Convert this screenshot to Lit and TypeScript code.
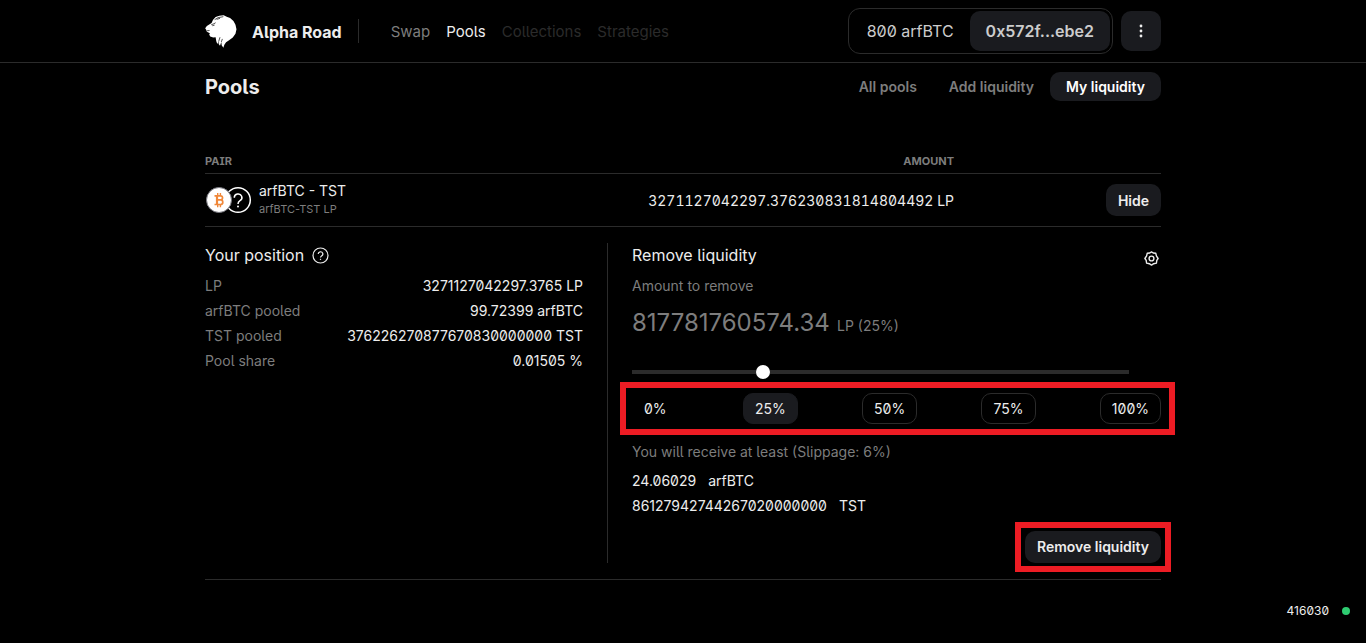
import { LitElement, html, css, svg } from "lit";
import { customElement, state } from "lit/decorators.js";
import { classMap } from "lit/directives/class-map.js";

const lion = svg`
  <path fill="#fff" d="M0 39 L5 33 L12 28 L19 24 L23 15 L31 6 L42 2 L55 1 L64 5 L74 9 L84 18 L90 29 L93 42 L90 56 L82 67 L71 75 L62 81 L57 88 L54 97 L49 90 L48 80 L44 91 L40 86 L40 79 L36 86 L33 78 L31 66 L24 67 L15 64 L12 58 L14 54 L5 50 L3 44 Z"/>
  <path fill="none" stroke="#000" stroke-width="2" d="M18 29 L26 26 L31 23 M21 32 L28 30 M28 14 L38 8 L54 5 M34 13 L44 10 M5 47 L13 46 M44 66 L40 79 M51 71 L48 80"/>`;

@customElement("app-root")
export class AppRoot extends LitElement {
  @state() private percent = 25;

  static styles = css`
    :host {
      display: flex;
      flex-direction: column;
      min-height: 100vh;
      background: #000;
      color: #ededed;
      font: 400 14px/25px Inter, sans-serif;
      font-feature-settings: "ss02", "zero";
    }
    * { box-sizing: border-box; }
    h1, h2, p, dl, dd { margin: 0; font-weight: 400; }
    a { color: inherit; text-decoration: none; }
    button {
      font: 600 14px/20px Inter, sans-serif;
      color: #ededed;
      background: #1a1b1f;
      border: 0;
      border-radius: 10px;
      padding: 6px 12px;
      cursor: pointer;
    }
    .inner { width: 100%; max-width: 988px; margin: 0 auto; padding: 0 16px; }
    header { border-bottom: 1px solid #2b2b2b; }
    .bar { display: flex; align-items: center; height: 62px; }
    .lion { width: 32px; height: 33px; display: block; }
    .brand { font-size: 16px; font-weight: 700; margin-left: 15px; line-height: 24px; padding-top: 2px; }
    .logo { display: flex; align-items: center; padding-right: 16px; }
    .site { display: flex; gap: 16px; border-left: 1px solid #2b2b2b; padding-left: 32px; height: 24px; line-height: 26px; font-size: 15px; color: #7d7d7d; flex: 1; }
    .site .on { color: #ededed; }
    .site .off { color: #2b2b2b; }
    .wallet { display: flex; align-items: center; border: 1px solid #2b2b2b; border-radius: 12px; padding: 2px; font-size: 16px; color: #ccc; padding-left: 18px; gap: 16px; }
    .address { font-size: 16px; line-height: 28px; color: #ccc; padding: 6px 16px; }
    .more { margin-left: 8px; width: 40px; height: 40px; padding: 12px; }
    .more svg { display: block; }
    .head { display: flex; justify-content: space-between; align-items: center; padding: 9px 0; }
    h1 { font-size: 20px; font-weight: 700; line-height: 27px; padding-top: 2px; }
    .tabs { display: flex; }
    .tabs button { background: none; color: #7d7d7d; padding: 5px 16px; line-height: 19px; }
    .tabs .on { background: #1a1b1f; color: #fff; }
    table { width: 100%; border-collapse: collapse; margin-top: 38px; table-layout: fixed; }
    td, th { padding: 0; }
    .action { width: 207px; text-align: right; }
    th { font-size: 11px; font-weight: 700; line-height: 23px; color: #7d7d7d; text-align: left; }
    thead th { padding-top: 2px; }
    .num { text-align: right; }
    .row td, .detail td { border-top: 1px solid #2b2b2b; }
    .row td { height: 53px; }
    .row button { padding: 7px 12px 5px; }
    .detail td { border-bottom: 1px solid #2b2b2b; }
    .pair { display: flex; align-items: center; gap: 7px; }
    .tokens { width: 47px; height: 28px; }
    .pair p { line-height: 19px; }
    .pair .sub { font-size: 11px; color: #7d7d7d; }
    .tab { font-feature-settings: "ss02", "zero", "tnum"; }
    .cols { display: grid; grid-template-columns: 403fr 553fr; padding: 16px 0; }
    .left { border-right: 1px solid #2b2b2b; padding-right: 24px; }
    .right { padding-left: 24px; min-width: 0; }
    h2 { font-size: 16px; line-height: 25px; display: flex; align-items: center; gap: 8px; }
    .line { display: flex; justify-content: space-between; }
    .line:first-of-type { margin-top: 5px; }
    .line dt { color: #7d7d7d; }
    .title { display: flex; justify-content: space-between; align-items: flex-start; height: 30px; }
    .gear { background: none; padding: 8px 2px 0; }
    .gear svg { display: block; }
    .muted { color: #7d7d7d; display: block; }
    .amount { display: flex; align-items: baseline; gap: 6px; color: #7d7d7d; margin: 9px 0 26px; height: 32px; font-feature-settings: normal; }
    .amount input { width: 199px; padding: 0; border: 0; background: none; color: #7d7d7d; font: 400 24px/32px Inter, sans-serif; outline: none; }
    .slider { display: block; appearance: none; width: calc(100% - 32px); height: 14px; margin: 0; background: linear-gradient(#2b2b2b, #2b2b2b) center / 100% 4px no-repeat; }
    .slider::-webkit-slider-thumb { appearance: none; width: 14px; height: 14px; border-radius: 50%; background: #fff; }
    .steps { display: flex; justify-content: space-between; position: relative; margin: 14px 0; }
    .steps button { border: 1px solid #2b2b2b; background: none; padding: 5px 11px; line-height: 19px; font-weight: 400; font-feature-settings: "ss02", "zero"; }
    .steps .zero { border-color: transparent; }
    .steps .on { background: #1a1b1f; border-color: #1a1b1f; }
    .steps::after, .submit::after { content: ""; position: absolute; border: 6px solid #ed1c24; pointer-events: none; }
    .steps::after { inset: -11px -14px -11px -12px; }
    .note { margin-top: 15px; }
    .receive { margin-top: 4px; }
    .out { display: flex; gap: 12px; }
    .submit { position: relative; width: fit-content; margin: 13px 0 0 auto; }
    .submit::after { inset: -9px -10px -9px -10px; }
    .submit button { display: block; }
    footer { margin-top: auto; display: flex; justify-content: flex-end; align-items: center; gap: 13px; padding: 0 16px 20px; font-size: 12px; }
    .dot { width: 8px; height: 8px; border-radius: 50%; background: #2ecc71; }
  `;

  private rows = [
    ["LP", "3271127042297.3765 LP"],
    ["arfBTC pooled", "99.72399 arfBTC"],
    ["TST pooled", "376226270877670830000000 TST"],
    ["Pool share", "0.01505 %"],
  ];

  render() {
    return html`
      <header>
        <div class="inner bar">
          <a class="logo" href="#">
            <svg class="lion" viewBox="0 0 94 98" aria-hidden="true">${lion}</svg>
            <span class="brand">Alpha Road</span>
          </a>
          <nav class="site">
            <a href="#">Swap</a><a class="on" href="#">Pools</a>
            <a class="off" href="#">Collections</a><a class="off" href="#">Strategies</a>
          </nav>
          <div class="wallet"><span>800 arfBTC</span><button class="address">0x572f...ebe2</button></div>
          <button class="more" aria-label="Menu">
            <svg width="16" height="16" fill="#ededed"><circle cx="8" cy="3" r="1.4"/><circle cx="8" cy="8" r="1.4"/><circle cx="8" cy="13" r="1.4"/></svg>
          </button>
        </div>
      </header>
      <main class="inner">
        <div class="head">
          <h1>Pools</h1>
          <div class="tabs"><button>All pools</button><button>Add liquidity</button><button class="on">My liquidity</button></div>
        </div>
        <table>
          <thead><tr><th>PAIR</th><th class="num">AMOUNT</th><th class="action"></th></tr></thead>
          <tbody>
            <tr class="row">
              <td>
                <div class="pair">
                  <svg class="tokens" viewBox="0 0 47 28" aria-hidden="true">
                    <circle cx="33" cy="14" r="12.3" fill="#000" stroke="#fff" stroke-width="1.5"/>
                    <path d="M29.3 11.7a3.8 3.6 0 1 1 5.7 3c-1.5.9-2 1.500-2 3.200" fill="none" stroke="#fff" stroke-width="1.5"/>
                    <circle cx="33" cy="20.5" r="1" fill="#fff"/>
                    <circle cx="14" cy="14" r="12.5" fill="#fff" stroke="#77777f"/>
                    <path d="M9.500 9.800H15.500a2 2 0 0 1 0 4.100H11.500M15.500 13.900a2.300 2.300 0 0 1 0 4.600H9.500" fill="none" stroke="#f0883a" stroke-width="1.700"/>
                    <path d="M12 9.500V18.900" fill="none" stroke="#f0883a" stroke-width="2.200"/>
                    <path d="M12.700 7V9.300M15.400 7V9.300M12.700 18.900V21.200M15.400 18.900V21.200" fill="none" stroke="#f0883a" stroke-width="1.400"/>
                  </svg>
                  <div><p>arfBTC - TST</p><p class="sub">arfBTC-TST LP</p></div>
                </div>
              </td>
              <td class="num tab">3271127042297.376230831814804492 LP</td>
              <td class="action"><button>Hide</button></td>
            </tr>
            <tr class="detail"><td colspan="3">
              <div class="cols">
                <section class="left">
                  <h2>Your position
                    <svg width="17" height="17" viewBox="0 0 17 17" fill="none" stroke="#ededed" stroke-width="1.200" aria-hidden="true"><circle cx="8.500" cy="8.500" r="7.500"/><path d="M6.200 7a2.300 2.200 0 1 1 3.400 1.900c-.9.5-1.100.9-1.100 1.700"/><path d="M8.500 11.800v1.100"/></svg>
                  </h2>
                  <dl>${this.rows.map(([k, v]) => html`<div class="line"><dt>${k}</dt><dd>${v}</dd></div>`)}</dl>
                </section>
                <section class="right">
                  <div class="title"><h2>Remove liquidity</h2>
                    <button class="gear" aria-label="Settings">
                      <svg width="15" height="15" viewBox="0 0 15 15" fill="none" stroke="#ededed" stroke-width="1.400" stroke-linejoin="round"><path d="M7.500 .9 9.200 2 11.800 2.300 12.400 4.900 14.100 7.500 12.800 9.400 12.400 12.100 9.700 12.700 7.500 14.100 5.300 12.700 2.600 12.100 2.200 9.400 .9 7.500 2.600 4.900 3.200 2.300 5.800 2Z"/><circle cx="7.500" cy="7.500" r="2.400"/></svg>
                    </button>
                  </div>
                  <label class="muted" for="amount">Amount to remove</label>
                  <div class="amount"><input id="amount" value="817781760574.34" /><span>LP (25%)</span></div>
                  <input class="slider" type="range" aria-label="Share to remove" min="-1" max="100" .value=${String(this.percent)}
                    @input=${(e: Event) => (this.percent = Number((e.target as HTMLInputElement).value))} />
                  <div class="steps">${[0, 25, 50, 75, 100].map((n) => html`<button
                    class=${classMap({ on: n === this.percent, zero: n === 0 })} @click=${() => (this.percent = n)}>${n}%</button>`)}</div>
                  <p class="muted note">You will receive at least (Slippage: 6%)</p>
                  <div class="receive">
                    <p class="out"><span>24.06029</span><span>arfBTC</span></p>
                    <p class="out"><span>86127942744267020000000</span><span>TST</span></p>
                  </div>
                  <div class="submit"><button>Remove liquidity</button></div>
                </section>
              </div>
            </td></tr>
          </tbody>
        </table>
      </main>
      <footer><span>416030</span><span class="dot"></span></footer>
    `;
  }
}
